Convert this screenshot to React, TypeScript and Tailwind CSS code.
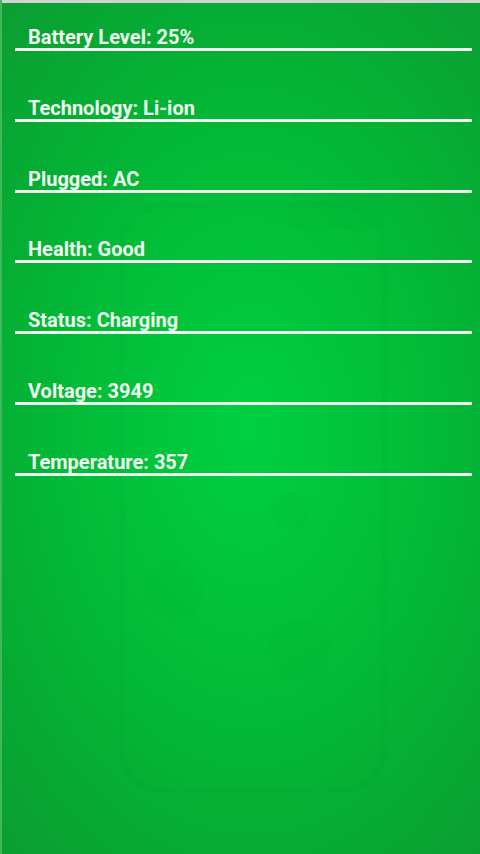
import React from "react";

const rows = [
  "Battery Level: 25%",
  "Technology: Li-ion",
  "Plugged: AC",
  "Health: Good",
  "Status: Charging",
  "Voltage: 3949",
  "Temperature: 357",
];

export default function App() {
  return (
    <div className="relative w-[480px] h-[854px] overflow-hidden bg-[radial-gradient(ellipse_75%_65%_at_52%_50%,#00d042_0%,#02bd38_45%,#06aa33_80%,#0b9f32_100%)]">
      <div className="absolute inset-0 pointer-events-none">
        <svg width="480" height="854" viewBox="0 0 480 854">
          <rect x="122" y="205" width="262" height="585" rx="40" fill="none" stroke="#0a8f2c" strokeOpacity="0.06" strokeWidth="6" />
          <rect x="290" y="190" width="95" height="40" rx="10" fill="#0a8f2c" fillOpacity="0.03" />
          <circle cx="175" cy="590" r="30" fill="#0a8f2c" fillOpacity="0.04" />
          <circle cx="300" cy="650" r="32" fill="#0a8f2c" fillOpacity="0.04" />
          <circle cx="290" cy="510" r="20" fill="#0a8f2c" fillOpacity="0.03" />
        </svg>
      </div>
      <div className="absolute left-0 top-0 w-full h-[3px] bg-[#cfd4cf]" />
      <div className="absolute left-0 top-0 h-full w-[2px] bg-[#3fb85c]" />
      <div
        className="relative flex flex-col gap-[44.8px] pt-[25px]"
        style={{ fontFamily: "Roboto, 'Liberation Sans', sans-serif" }}
      >
        {rows.map((r) => (
          <div key={r} className="flex flex-col">
            <div className="pl-[28px] text-[20px] leading-[24px] font-bold text-[#eefbee]">
              {r}
            </div>
            <div className="ml-[15px] w-[457px] h-[3px] mt-[-1px] bg-[#f2fbf2] rounded-r-[1px]" />
          </div>
        ))}
      </div>
    </div>
  );
}
